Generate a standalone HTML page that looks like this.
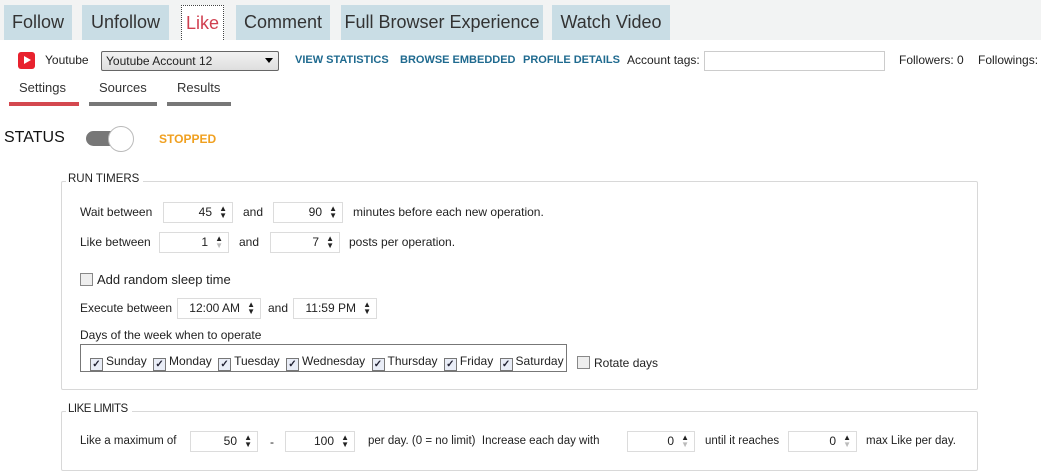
<!DOCTYPE html>
<html><head><meta charset="utf-8"><style>
*{margin:0;padding:0;box-sizing:border-box}
body{width:1041px;height:474px;overflow:hidden;background:#fff;font-family:"Liberation Sans",sans-serif;color:#222;position:relative;font-size:12px}
.a{position:absolute;white-space:nowrap}
.tab{position:absolute;top:5px;height:35px;background:#c9dde5;font-size:18px;color:#333;line-height:34px;text-align:center}
.lnk{color:#1f6a8f;font-weight:bold;font-size:11px}
.sp{position:absolute;height:21px;border:1px solid #dcdcdc;background:#fff;font-size:12px;line-height:19px;text-align:right;padding-right:20px}
.sp i{position:absolute;right:5px;top:2px;font-style:normal;font-size:8px;line-height:7px;color:#222;text-align:center}
.sp i.d b{color:#bbb;font-weight:normal}
.sp i b{display:block;font-weight:normal}
.fs{position:absolute;border:1px solid #d8d8d8;border-radius:2px}
.lg{position:absolute;background:#fff;padding:0 4px 0 2px;font-size:11.5px;color:#222}
.cb{display:inline-block;width:13px;height:13px;border:1px solid #777;background:#e9edf7;vertical-align:-2px;margin-right:3px;font-size:10px;line-height:11px;text-align:center;color:#223;font-weight:bold}
.cbe{display:inline-block;width:13px;height:13px;border:1px solid #888;background:#eee;vertical-align:-2px;margin-right:4px}
</style></head><body>
<div class="a" style="left:0;top:0;width:1041px;height:40px;background:#f2f3f3"></div>
<div class="tab" style="left:4px;width:68px">Follow</div>
<div class="tab" style="left:82px;width:87px">Unfollow</div>
<div class="tab" style="left:181px;width:43px;background:#fff;border:1px dotted #444;border-bottom:none;color:#d04050">Like</div>
<div class="tab" style="left:236px;width:94px">Comment</div>
<div class="tab" style="left:341px;width:202px">Full Browser Experience</div>
<div class="tab" style="left:552px;width:118px">Watch Video</div>

<div class="a" style="left:18px;top:52px;width:17px;height:17px;background:#e8222e;border-radius:3px"></div>
<div class="a" style="left:24px;top:56px;width:0;height:0;border-left:7px solid #fff;border-top:4.5px solid transparent;border-bottom:4.5px solid transparent"></div>
<div class="a" style="left:45px;top:53px;font-size:12px">Youtube</div>
<div class="a" style="left:101px;top:51px;width:178px;height:20px;border:1px solid #666;border-radius:2px;background:linear-gradient(#f2f2f2,#dedede);font-size:12px;padding:2px 0 0 4px">Youtube Account 12<span style="position:absolute;right:5px;top:6px;border-top:5px solid #000;border-left:4px solid transparent;border-right:4px solid transparent"></span></div>
<div class="a lnk" style="left:295px;top:54px">VIEW STATISTICS</div>
<div class="a lnk" style="left:400px;top:54px">BROWSE EMBEDDED</div>
<div class="a lnk" style="left:523px;top:54px">PROFILE DETAILS</div>
<div class="a" style="left:627px;top:53px">Account tags:</div>
<div class="a" style="left:704px;top:51px;width:181px;height:20px;border:1px solid #ccc"></div>
<div class="a" style="left:899px;top:53px">Followers: 0</div>
<div class="a" style="left:978px;top:53px">Followings:</div>

<div class="a" style="left:19px;top:80px;font-size:13px;color:#333">Settings</div>
<div class="a" style="left:99px;top:80px;font-size:13px;color:#333">Sources</div>
<div class="a" style="left:177px;top:80px;font-size:13px;color:#333">Results</div>
<div class="a" style="left:9px;top:102px;width:70px;height:4px;background:#d4484f"></div>
<div class="a" style="left:89px;top:102px;width:68px;height:4px;background:#777"></div>
<div class="a" style="left:167px;top:102px;width:64px;height:4px;background:#777"></div>

<div class="a" style="left:4px;top:129px;font-size:16px;color:#111">STATUS</div>
<div class="a" style="left:86px;top:131px;width:40px;height:15px;border-radius:8px;background:#777"></div>
<div class="a" style="left:108px;top:126px;width:26px;height:26px;border-radius:50%;background:#fff;border:1px solid #bbb"></div>
<div class="a" style="left:159px;top:132px;color:#f0a020;font-weight:bold;font-size:12px">STOPPED</div>

<div class="fs" style="left:61px;top:181px;width:917px;height:209px"></div>
<div class="lg" style="left:66px;top:173px">RUN TIMERS</div>
<div class="a" style="left:80px;top:205px">Wait between</div>
<div class="sp" style="left:163px;top:202px;width:70px">45<i><b>▲</b><b>▼</b></i></div>
<div class="a" style="left:243px;top:205px">and</div>
<div class="sp" style="left:273px;top:202px;width:70px">90<i><b>▲</b><b>▼</b></i></div>
<div class="a" style="left:353px;top:205px">minutes before each new operation.</div>
<div class="a" style="left:80px;top:235px">Like between</div>
<div class="sp" style="left:159px;top:232px;width:70px">1<i class="d"><b style="color:#222">▲</b><b>▼</b></i></div>
<div class="a" style="left:239px;top:235px">and</div>
<div class="sp" style="left:270px;top:232px;width:70px">7<i><b>▲</b><b>▼</b></i></div>
<div class="a" style="left:349px;top:235px">posts per operation.</div>
<div class="a" style="left:80px;top:272px;font-size:13px"><span class="cbe"></span>Add random sleep time</div>
<div class="a" style="left:80px;top:301px">Execute between</div>
<div class="sp" style="left:177px;top:298px;width:84px">12:00 AM<i><b>▲</b><b>▼</b></i></div>
<div class="a" style="left:268px;top:301px">and</div>
<div class="sp" style="left:293px;top:298px;width:84px">11:59 PM<i><b>▲</b><b>▼</b></i></div>
<div class="a" style="left:80px;top:328px">Days of the week when to operate</div>
<div class="a" style="left:80px;top:344px;width:487px;height:28px;border:1px solid #777"></div>
<div class="a" style="left:90px;top:354px"><span class="cb">✓</span>Sunday <span class="cb" style="margin-left:3px">✓</span>Monday <span class="cb" style="margin-left:3px">✓</span>Tuesday <span class="cb" style="margin-left:3px">✓</span>Wednesday <span class="cb" style="margin-left:3px">✓</span>Thursday <span class="cb" style="margin-left:3px">✓</span>Friday <span class="cb" style="margin-left:3px">✓</span>Saturday</div>
<div class="a" style="left:577px;top:356px"><span class="cbe"></span>Rotate days</div>

<div class="fs" style="left:61px;top:411px;width:917px;height:60px"></div>
<div class="lg" style="left:66px;top:403px;letter-spacing:-0.5px">LIKE LIMITS</div>
<div class="a" style="left:80px;top:435px;font-size:11.5px">Like a maximum of</div>
<div class="sp" style="left:190px;top:431px;width:68px">50<i><b>▲</b><b>▼</b></i></div>
<div class="a" style="left:270px;top:435px">-</div>
<div class="sp" style="left:285px;top:431px;width:70px">100<i><b>▲</b><b>▼</b></i></div>
<div class="a" style="left:368px;top:435px;font-size:11.5px">per day. (0 = no limit)&nbsp; Increase each day with</div>
<div class="sp" style="left:627px;top:431px;width:68px">0<i class="d"><b style="color:#222">▲</b><b>▼</b></i></div>
<div class="a" style="left:705px;top:435px;font-size:11.5px">until it reaches</div>
<div class="sp" style="left:788px;top:431px;width:69px">0<i class="d"><b style="color:#222">▲</b><b>▼</b></i></div>
<div class="a" style="left:866px;top:435px;font-size:11.5px">max Like per day.</div>
</body></html>
